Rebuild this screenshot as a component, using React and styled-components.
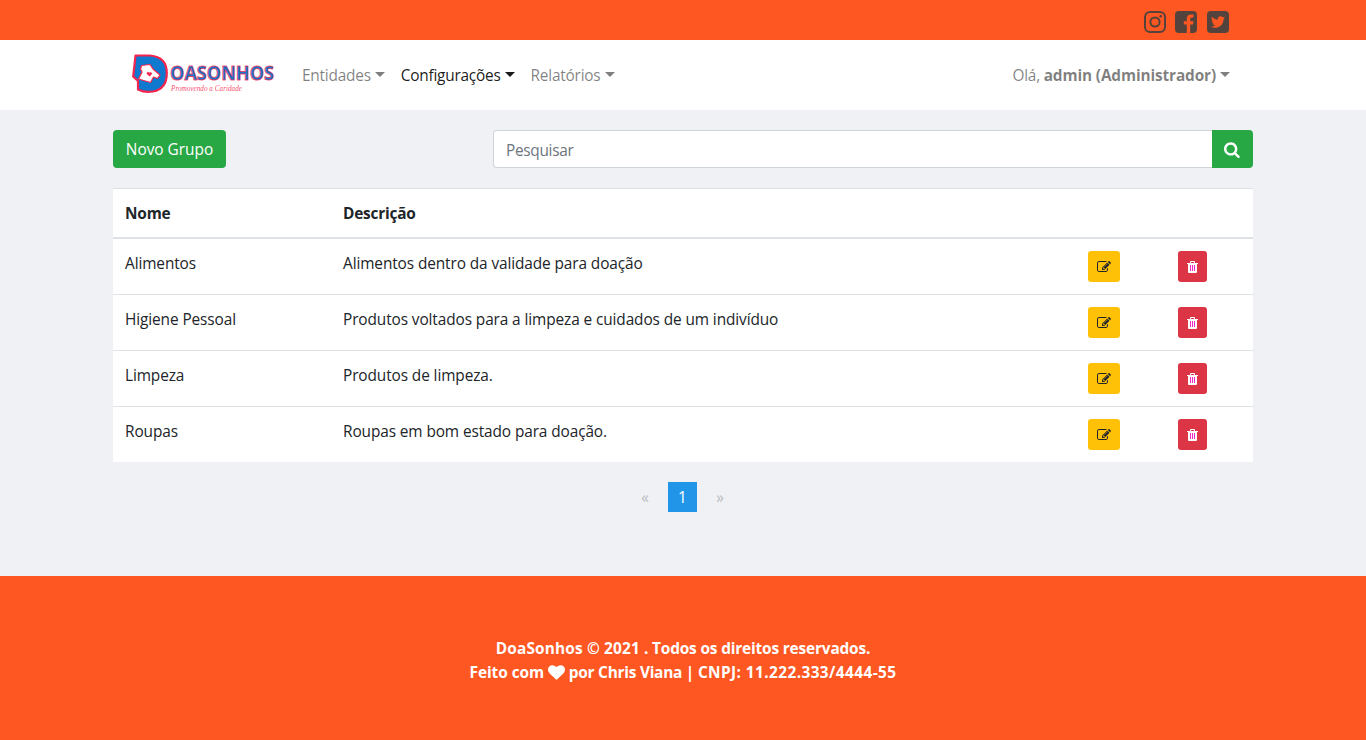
import React from "react";
import styled, { createGlobalStyle, css } from "styled-components";

const GlobalStyle = createGlobalStyle`
  *, *::before, *::after { box-sizing: border-box; }
  body {
    margin: 0;
    background: #f0f1f5;
    color: #212529;
    font-family: "Open Sans", "Noto Sans", sans-serif;
    font-size: 15.4px;
    line-height: 24px;
  }
`;

const Page = styled.div`
  display: flex;
  flex-direction: column;
  min-height: 740px;
`;

const Container = styled.div`
  width: 1140px;
  margin: 0 auto;
`;

const TopBar = styled.div`
  height: 40px;
  background: #ff5722;
`;

const SocialLinks = styled(Container)`
  display: flex;
  justify-content: flex-end;
  gap: 9.5px;
  padding: 11px 24.5px 0 0;
  color: #53433c;
  svg { display: block; width: 22px; height: 22px; }
`;

const NavBar = styled.nav`
  height: 70px;
  background: #fff;
`;

const NavInner = styled(Container)`
  display: flex;
  align-items: center;
  height: 70px;
  padding: 0 23px 0 17px;
`;

const Brand = styled.a`
  display: block;
  width: 150px;
  height: 50px;
  margin-right: 22px;
  svg { display: block; overflow: visible; }
`;

const NavItem = styled.a`
  display: flex;
  align-items: center;
  height: 24px;
  margin: 2px 16px 0 0;
  color: ${(p) => (p.$active ? "rgba(0,0,0,.9)" : "rgba(0,0,0,.5)")};
  letter-spacing: -0.22px;
  white-space: pre;
  ${(p) => p.$end && css`margin: 2px 0 0 auto;`}
  strong { font-weight: 700; letter-spacing: -0.14px; }
  &::after {
    content: "";
    margin: -4px 0 0 4px;
    border-top: 5px solid;
    border-left: 5px solid transparent;
    border-right: 5px solid transparent;
  }
`;

const Main = styled(Container)`
  flex: 1;
  padding-top: 20px;
`;

const Toolbar = styled.div`
  display: flex;
  justify-content: space-between;
  margin-bottom: 20px;
`;

const NewButton = styled.button`
  width: 113px;
  height: 38px;
  padding: 2px 0 0;
  border: 0;
  border-radius: 4px;
  background: #28a745;
  color: #fff;
  font: inherit;
`;

const SearchGroup = styled.div`
  display: flex;
  width: 760px;
  height: 38px;
`;

const SearchInput = styled.input`
  flex: 1;
  min-width: 0;
  padding: 4px 12px 0;
  border: 1px solid #ced4da;
  border-right: 0;
  border-radius: 4px 0 0 4px;
  background: #fff;
  font: inherit;
  letter-spacing: -0.3px;
  outline: 0;
  &::placeholder { color: #6c757d; opacity: 1; }
`;

const SearchButton = styled.button`
  display: flex;
  align-items: center;
  justify-content: center;
  width: 41px;
  padding: 0;
  border: 0;
  border-radius: 0 4px 4px 0;
  background: #28a745;
  color: #fff;
`;

const Table = styled.div`
  background: #fff;
`;

const Row = styled.div`
  display: grid;
  grid-template-columns: 218px 745px 90px 87px;
  height: 56px;
  padding-top: 12px;
  border-top: 1px solid #dee2e6;
  letter-spacing: -0.1px;
`;

const HeadRow = styled(Row)`
  height: 51px;
  border-bottom: 2px solid #dee2e6;
  font-weight: 700;
  letter-spacing: -0.2px;
  & + ${Row} { height: 55px; border-top: 0; }
`;

const Cell = styled.div`
  padding-left: 12px;
`;

const TextCell = styled(Cell)`
  padding-top: 1px;
`;

const ActionButton = styled.button`
  display: flex;
  align-items: center;
  justify-content: center;
  width: ${(p) => (p.$danger ? 29 : 32)}px;
  height: 31px;
  padding: 0;
  border: 0;
  border-radius: 3px;
  background: ${(p) => (p.$danger ? "#dc3545" : "#ffc107")};
  color: ${(p) => (p.$danger ? "#fff" : "#212529")};
`;

const Pagination = styled.div`
  display: flex;
  justify-content: center;
  gap: 8px;
  padding: 20px 1px 0 0;
`;

const PageLink = styled.a`
  width: ${(p) => (p.$active ? 29 : 30)}px;
  height: 30px;
  line-height: 32px;
  text-align: center;
  background: ${(p) => (p.$active ? "#2196e8" : "transparent")};
  color: ${(p) => (p.$active ? "#fff" : "#b9bbbf")};
`;

const Footer = styled.footer`
  height: 164px;
  padding-top: 61px;
  background: #ff5722;
  color: #fff;
  font-weight: 700;
  text-align: center;
`;

const FooterLine = styled.div`
  display: flex;
  align-items: center;
  justify-content: center;
  height: 24px;
  white-space: pre;
  svg { margin-bottom: 2px; }
`;

const FooterText = styled.span`
  letter-spacing: ${(p) => p.$track || 0}px;
`;

const FaIcon = ({ d, size = 16 }) => (
  <svg width={size} height={size} viewBox="0 0 1792 1792" fill="currentColor">
    <path d={d} />
  </svg>
);

const SEARCH =
  "M1152 832q0-185-131.5-316.5t-316.5-131.5-316.5 131.5-131.5 316.5 131.5 316.5 316.5 131.5 316.5-131.5 131.5-316.5zm512 832q0 52-38 90t-90 38q-54 0-90-38l-343-342q-179 124-399 124-143 0-273.5-55.5t-225-150-150-225-55.5-273.5 55.5-273.5 150-225 225-150 273.5-55.5 273.5 55.5 225 150 150 225 55.5 273.5q0 220-124 399l343 343q37 37 37 90z";
const EDIT =
  "M888 1184l116-116-152-152-116 116v56h96v96h56zm440-720q-16-16-33 1l-350 350q-17 17-1 33t33-1l350-350q17-17 1-33zm80 594v190q0 119-84.5 203.5t-203.5 84.5h-832q-119 0-203.5-84.5t-84.5-203.5v-832q0-119 84.5-203.5t203.5-84.5h832q63 0 117 25 15 7 18 23 3 17-9 29l-49 49q-14 14-32 8-23-6-45-6h-832q-66 0-113 47t-47 113v832q0 66 47 113t113 47h832q66 0 113-47t47-113v-126q0-13 9-22l64-64q15-15 35-7t20 29zm-96-738l288 288-672 672h-288v-288zm444 132l-92 92-288-288 92-92q28-28 68-28t68 28l152 152q28 28 28 68t-28 68z";
const HEART =
  "M896 1664q-26 0-44-18l-624-602q-10-8-27.5-26t-55.5-65.5-68-97.5-53.5-121-23.5-138q0-220 127-344t351-124q62 0 126.500 21.500t120 58 95.500 68.500 76 68q36-36 76-68t95.500-68.500 120-58 126.500-21.500q224 0 351 124t127 344q0 221-229 450l-623 600q-18 18-44 18z";

const TrashIcon = () => (
  <svg width="11" height="12" viewBox="0 0 11 12">
    <path fill="#fff" fillRule="evenodd" d="M3 2V1Q3 0 4 0H7Q8 0 8 1V2H11V3H10V11Q10 12 9 12H2Q1 12 1 11V3H0V2ZM4 2H7V1H4Z" />
    <path stroke="#f22bc4" d="M3.500 4V10M5.500 4V10M7.500 4V10" />
  </svg>
);

const Logo = () => (
  <svg width="150" height="50" viewBox="130 50 150 50">
    <path d="M135.500 55.500H150Q166.800 57 166.800 73T153 91.500Q145 93 138 89.500L138 81L133.200 76.500Z" fill="#0f78cf" stroke="#f5244e" strokeWidth="2.200" strokeLinejoin="round" />
    <path d="M141.500 65.500L150 64.500L153 69L160 75L157.500 78.500L153.500 77L150.500 82.500L138.500 79L142 72L140.500 69Z" fill="#fff" stroke="#f5244e" strokeWidth="1.200" strokeLinejoin="round" />
    <path d="M149.500 76.500L146.500 73.500Q147 71 149.500 72.500Q152 71.500 152 74Z" fill="#f5244e" />
    <text x="170" y="80" textLength="104" lengthAdjust="spacingAndGlyphs" fontFamily="Open Sans" fontWeight="700" fontSize="20" fill="#1874c8" stroke="#f5244e" strokeOpacity=".75" strokeWidth=".9">OASONHOS</text>
    <text x="171" y="91" textLength="71" lengthAdjust="spacingAndGlyphs" fontFamily="Liberation Serif" fontStyle="italic" fontSize="8" fill="#f5244e" fillOpacity=".85">Promovendo a Caridade</text>
  </svg>
);

const InstagramIcon = () => (
  <svg viewBox="0 0 22 22" fill="none" stroke="currentColor" strokeWidth="2">
    <rect x="1" y="1" width="20" height="20" rx="5" />
    <circle cx="11" cy="11" r="4.600" />
    <circle cx="16.700" cy="5.300" r="1.300" fill="currentColor" stroke="none" />
  </svg>
);

const FacebookIcon = () => (
  <svg viewBox="0 0 22 22" fill="currentColor">
    <path d="M4 0H18Q22 0 22 4V18Q22 22 18 22H15.200V13.500H18L18.500 10.200H15.200V8.200Q15.200 6.500 17 6.500H18.500V3.600Q17.500 3.400 16.200 3.400Q11.800 3.400 11.800 7.700V10.200H8.800V13.500H11.800V22H4Q0 22 0 18V4Q0 0 4 0Z" />
  </svg>
);

const TwitterIcon = () => (
  <svg viewBox="0 0 22 22">
    <rect width="22" height="22" rx="4" fill="currentColor" />
    <path transform="translate(4 4) scale(.0273)" fill="#ff5722" d="M459.370 151.716c.325 4.548.325 9.097.325 13.645 0 138.720-105.583 298.558-298.558 298.558-59.452 0-114.680-17.219-161.137-47.106 8.447.974 16.568 1.299 25.340 1.299 49.055 0 94.213-16.568 130.274-44.832-46.132-.975-84.792-31.188-98.112-72.772 6.498.974 12.995 1.624 19.818 1.624 9.421 0 18.843-1.300 27.614-3.573-48.081-9.747-84.143-51.980-84.143-102.985v-1.299c13.969 7.797 30.214 12.670 47.431 13.319-28.264-18.843-46.781-51.005-46.781-87.391 0-19.492 5.197-37.360 14.294-52.954 51.655 63.675 129.300 105.258 216.365 109.807-1.624-7.797-2.599-15.918-2.599-24.040 0-57.828 46.782-104.934 104.934-104.934 30.213 0 57.502 12.670 76.670 33.137 23.715-4.548 46.456-13.320 66.599-25.340-7.798 24.366-24.366 44.833-46.132 57.827 21.117-2.273 41.584-8.122 60.426-16.243-14.292 20.791-32.161 39.308-52.628 54.253z" />
  </svg>
);

const GROUPS = [
  { name: "Alimentos", text: "Alimentos dentro da validade para doação" },
  { name: "Higiene Pessoal", text: "Produtos voltados para a limpeza e cuidados de um indivíduo" },
  { name: "Limpeza", text: "Produtos de limpeza." },
  { name: "Roupas", text: "Roupas em bom estado para doação." },
];

export default function App() {
  return (
    <Page>
      <GlobalStyle />
      <TopBar>
        <SocialLinks>
          <InstagramIcon />
          <FacebookIcon />
          <TwitterIcon />
        </SocialLinks>
      </TopBar>
      <NavBar>
        <NavInner>
          <Brand><Logo /></Brand>
          <NavItem>Entidades</NavItem>
          <NavItem $active>Configurações</NavItem>
          <NavItem>Relatórios</NavItem>
          <NavItem $end>Olá, <strong>admin (Administrador)</strong></NavItem>
        </NavInner>
      </NavBar>
      <Main>
        <Toolbar>
          <NewButton>Novo Grupo</NewButton>
          <SearchGroup>
            <SearchInput placeholder="Pesquisar" />
            <SearchButton><FaIcon d={SEARCH} size={17} /></SearchButton>
          </SearchGroup>
        </Toolbar>
        <Table>
          <HeadRow>
            <TextCell>Nome</TextCell>
            <TextCell>Descrição</TextCell>
          </HeadRow>
          {GROUPS.map((g) => (
            <Row key={g.name}>
              <TextCell>{g.name}</TextCell>
              <TextCell>{g.text}</TextCell>
              <Cell><ActionButton><FaIcon d={EDIT} size={14} /></ActionButton></Cell>
              <Cell><ActionButton $danger><TrashIcon /></ActionButton></Cell>
            </Row>
          ))}
        </Table>
        <Pagination>
          <PageLink>«</PageLink>
          <PageLink $active>1</PageLink>
          <PageLink>»</PageLink>
        </Pagination>
      </Main>
      <Footer>
        <FooterLine>
          <FooterText $track={0.15}>{"DoaSonhos © 2021 "}</FooterText>
          <FooterText $track={-0.16}>. Todos os direitos reservados.</FooterText>
        </FooterLine>
        <FooterLine>
          <FooterText $track={-0.05}>{"Feito com "}</FooterText>
          <FaIcon d={HEART} size={17} />
          <FooterText $track={-0.24}>{" por Chris Viana | "}</FooterText>
          <FooterText $track={0.41}>CNPJ: 11.222.333/4444-55</FooterText>
        </FooterLine>
      </Footer>
    </Page>
  );
}
